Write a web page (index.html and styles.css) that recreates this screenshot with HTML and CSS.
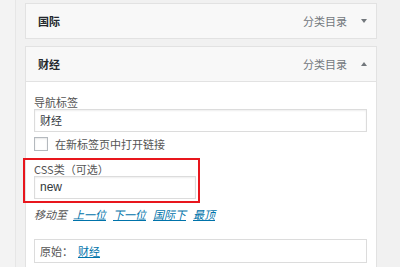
FILE: index.html
```html
<!DOCTYPE html>
<html lang="zh-CN">
<head>
<meta charset="utf-8">
<link rel="stylesheet" href="styles.css">
</head>
<body>
<div class="page">
  <div class="side"></div>
  <div class="main">
    <div class="card">
      <div class="card-head">
        <span class="title">国际</span>
        <span class="meta">分类目录</span>
        <span class="arrow down"></span>
      </div>
    </div>
    <div class="card open">
      <div class="card-head">
        <span class="title">财经</span>
        <span class="meta">分类目录</span>
        <span class="arrow up"></span>
      </div>
      <div class="card-body">
        <div class="label">导航标签</div>
        <div class="input wide">财经</div>
        <div class="check-row">
          <span class="checkbox"></span>
          <span class="check-label">在新标签页中打开链接</span>
        </div>
        <div class="highlight">
          <div class="label">CSS类（可选）</div>
          <div class="input narrow mono">new</div>
        </div>
        <div class="move-row">
          <span class="move-label">移动至</span>
          <a class="link">上一位</a>
          <a class="link">下一位</a>
          <a class="link">国际下</a>
          <a class="link">最顶</a>
        </div>
        <div class="original">
          <span class="orig-label">原始：</span>
          <a class="link plain">财经</a>
        </div>
      </div>
    </div>
  </div>
</div>
</body>
</html>
```

FILE: styles.css
```css
* { box-sizing: border-box; }
html, body { margin: 0; padding: 0; }
body {
  background: #f1f1f1;
  font-family: "Noto Sans CJK SC", "Noto Sans", sans-serif;
  font-size: 11px;
  color: #444;
  width: 400px;
  height: 267px;
  overflow: hidden;
}
.page {
  display: flex;
  height: 267px;
}
.side {
  width: 16px;
  flex: none;
  border-right: 1px solid #e6e6e6;
  background: #f3f3f3;
}
.main {
  padding: 3px 0 0 9px;
  width: 361px;
  flex: none;
}
.card {
  border: 1px solid #e2e2e2;
  background: #f8f8f8;
}
.card + .card {
  margin-top: 7px;
}
.card-head {
  height: 34px;
  display: flex;
  align-items: center;
  padding: 0 9px 0 12px;
}
.title {
  font-weight: 600;
  font-size: 11px;
  color: #23282d;
  flex: 1;
}
.meta {
  color: #72777c;
  font-size: 11px;
}
.arrow {
  width: 0;
  height: 0;
  margin-left: 14px;
  border-left: 3.5px solid transparent;
  border-right: 3.5px solid transparent;
}
.arrow.down { border-top: 4px solid #72777c; }
.arrow.up { border-bottom: 4px solid #72777c; }
.card.open .card-head {
  border-bottom: 1px solid #e2e2e2;
  height: 35px;
}
.card-body {
  background: #fff;
  padding: 13px 9px 4px 8px;
}
.label {
  line-height: 14px;
  color: #555;
}
.input {
  height: 23px;
  border: 1px solid #dcdcdc;
  box-shadow: inset 0 1px 2px rgba(0,0,0,0.07);
  background: #fff;
  padding: 0 5px;
  line-height: 21px;
  color: #32373c;
}
.input.wide { width: 100%; }
.input.narrow { width: 162px; }
.input.mono {
  font-family: "Liberation Sans", sans-serif;
  font-size: 12px;
}
.check-row {
  display: flex;
  align-items: center;
  margin-top: 4px;
  height: 15px;
}
.checkbox {
  width: 14px;
  height: 14px;
  border: 1px solid #b4b9be;
  background: #fff;
  box-shadow: inset 0 1px 2px rgba(0,0,0,0.1);
}
.check-label {
  margin-left: 7px;
  color: #555;
}
.highlight {
  position: relative;
  margin-top: 11px;
  width: 162px;
}
.highlight::before {
  content: "";
  position: absolute;
  top: -4px;
  bottom: -4px;
  left: -11px;
  right: -4px;
  border: 2px solid #e8161d;
  pointer-events: none;
}
.move-row {
  margin-top: 8px;
  line-height: 14px;
  font-style: italic;
  display: flex;
  gap: 7px;
}
.move-label {
  color: #555;
  margin-right: -1px;
}
.link {
  color: #0073aa;
  text-decoration: underline;
}
.original {
  margin-top: 18px;
  height: 24px;
  border: 1px solid #dcdcdc;
  display: flex;
  align-items: center;
  padding-left: 5px;
  color: #555;
}
.orig-label {
  margin-right: 5px;
}
```
